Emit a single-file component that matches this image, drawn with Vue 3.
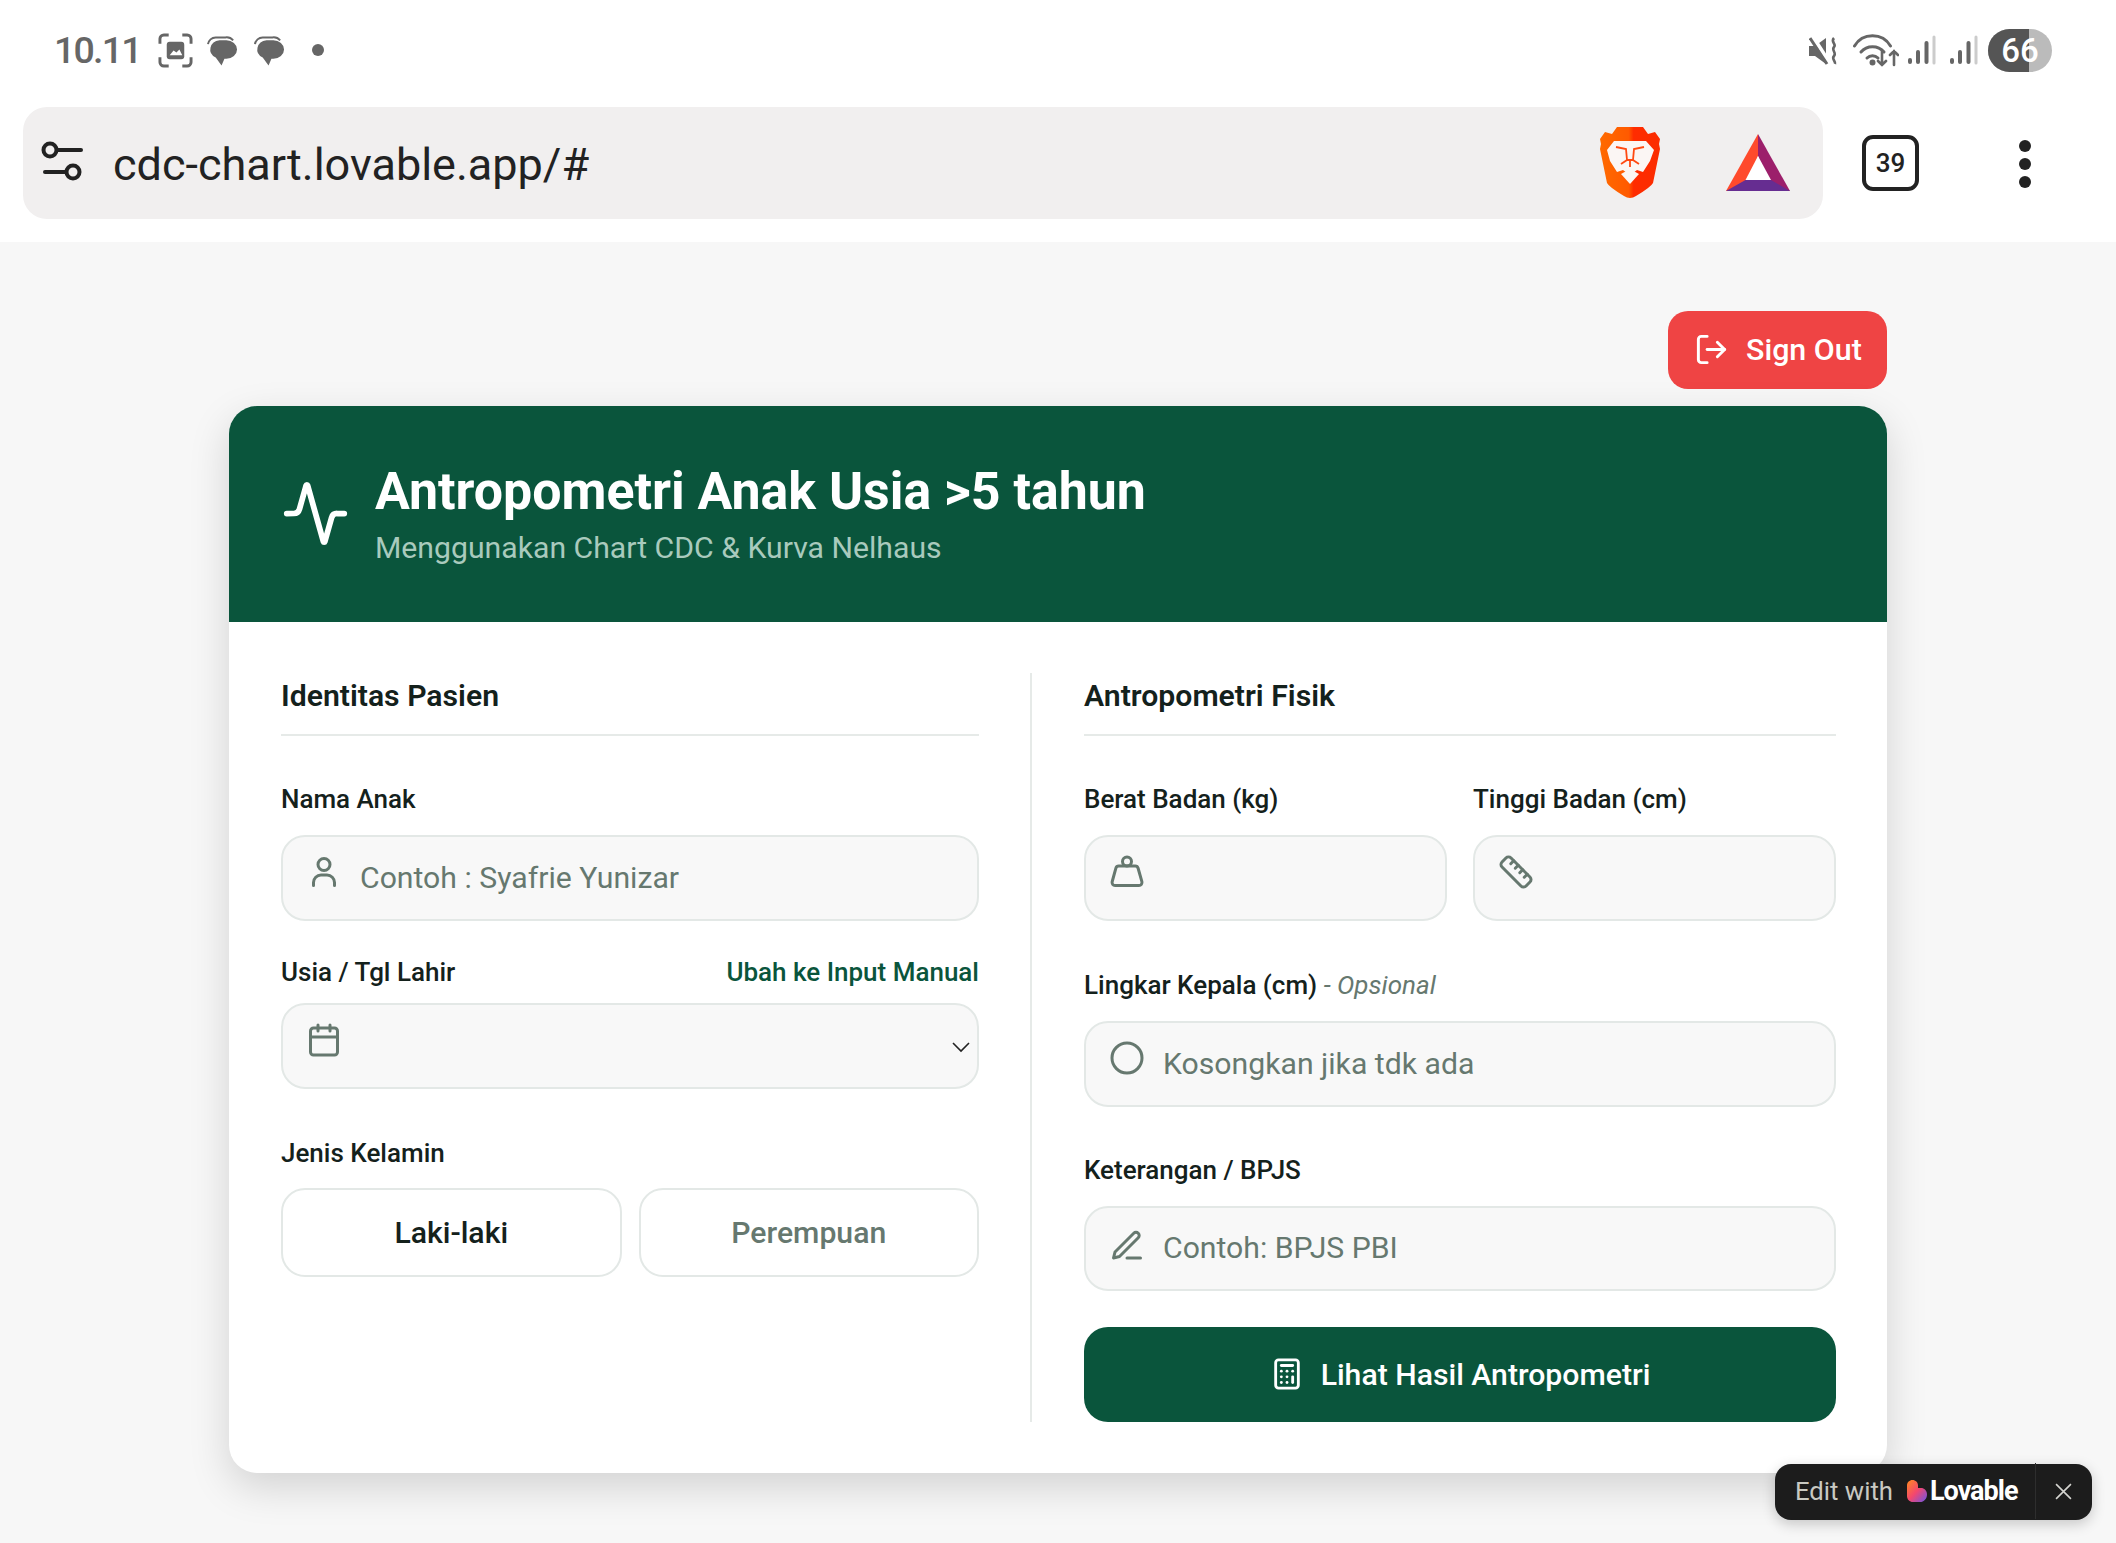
<template>
  <div class="screen">
    <div class="status-bar">
      <div class="status-left">
        <span class="clock">10.11</span>
        <svg class="st-shot" viewBox="0 0 36 36" fill="none" stroke="#666" stroke-width="3">
          <path d="M2 11V6a4 4 0 0 1 4-4h5M25 2h5a4 4 0 0 1 4 4v5M34 25v5a4 4 0 0 1-4 4h-5M11 34H6a4 4 0 0 1-4-4v-5" />
          <rect x="9" y="9" width="18" height="18" rx="3" fill="#666" stroke="none" />
          <path d="M12 23l4-5 3 2 3-3 3 6z" fill="#fff" stroke="none" />
        </svg>
        <svg v-for="n in 2" :key="n" class="st-chat" viewBox="0 0 32 30">
          <path d="M1 8a8 8 0 0 1 8-7h10a9 9 0 0 1 8 3" fill="none" stroke="#666" stroke-width="2" />
          <path d="M13 4h7a11 9.500 0 0 1 0 19h-2l-3 7-6-8.300A11 9.500 0 0 1 13 4z" fill="#666" />
        </svg>
        <span class="st-dot"></span>
      </div>
      <div class="status-right">
        <svg class="st-mute" viewBox="0 0 30 28" fill="#666">
          <path d="M0 9h6l11-8v26L6 19H0z" />
          <path d="M4 0l18 28" stroke="#fff" stroke-width="4" />
          <path d="M1 1l17 26" stroke="#666" stroke-width="3" />
          <path d="M25 1c-4 4 3 6 0 9s3 6 0 9 2 5 1 8" fill="none" stroke="#666" stroke-width="2.600" />
        </svg>
        <svg class="st-wifi" viewBox="0 0 46 33" fill="none" stroke="#666" stroke-width="3" stroke-linecap="round">
          <path d="M1.500 12a21 21 0 0 1 36 0" />
          <path d="M8 18a15 15 0 0 1 23 0" />
          <path d="M14 24a8 8 0 0 1 11 0" />
          <circle cx="19.500" cy="28.500" r="1.500" fill="#666" />
          <path d="M29 17v14M25 27l4 4 4-4M41 31V17M37 21l4-4 4 4" stroke-width="2.600" />
        </svg>
        <svg v-for="n in 2" :key="n" class="st-signal" viewBox="0 0 28 30" stroke-linecap="round" stroke-width="4">
          <path d="M2 27v-2" stroke="#666" />
          <path d="M10 27V17" stroke="#666" />
          <path d="M18.500 27V8" stroke="#666" />
          <path d="M26 28V2" stroke="#ccc" stroke-width="3" />
        </svg>
        <div class="battery"><span class="battery-fill"></span><span class="battery-num">66</span></div>
      </div>
    </div>

    <div class="browser-bar">
      <div class="url-box">
        <svg class="url-tune" viewBox="0 0 44 44" fill="none" stroke="#222" stroke-width="4" stroke-linecap="round">
          <circle cx="10" cy="9" r="6.500" />
          <path d="M17 9h24" />
          <circle cx="33" cy="31" r="6.500" />
          <path d="M26 31H5" />
        </svg>
        <span class="url-text">cdc-chart.lovable.app/#</span>
        <svg class="brave" viewBox="0 0 60 72">
          <defs>
            <linearGradient id="braveGrad" x1="0" y1="0" x2="1" y2="0">
              <stop offset="0" stop-color="#ff6a00" />
              <stop offset="0.48" stop-color="#ff5a00" />
              <stop offset="0.56" stop-color="#ff2c00" />
              <stop offset="1" stop-color="#fb2c00" />
            </linearGradient>
          </defs>
          <path d="M17 0H43L48 7 55 5 60 12 59 17 60 22 53 56Q51 60 36 69 30 73 24 69 9 60 7 56L0 22 1 17 0 12 5 5 12 7Z" fill="url(#braveGrad)" />
          <path d="M7 23L14 14H46L54 23 50 34 43 45 37 43 33 46H27L23 43 17 45 10 34Z" fill="#fbf6f4" />
          <path d="M16 20L26 22 27 33 21 37M44 20L34 22 33 33 39 37M27 33h6M30 34v6" fill="none" stroke="#ff4a12" stroke-width="1.800" />
          <path d="M21 47L30 42 39 47 30 57Z" fill="#fbf6f4" />
        </svg>
        <svg class="bat" viewBox="0 0 64 58">
          <path d="M32 0L64 57H45L32 22Z" fill="#9c1f6b" />
          <path d="M32 0L0 57H19.500L32 22Z" fill="#ff4a2c" />
          <path d="M0 57H64L45 46H19.500Z" fill="#662d91" />
          <path d="M32 22L19.500 46H45Z" fill="#fff" />
        </svg>
      </div>
      <div class="tab-count">39</div>
      <div class="kebab"><span></span><span></span><span></span></div>
    </div>

    <main class="page">
      <button class="signout">
        <svg class="ic-signout" viewBox="0 0 24 24" fill="none" stroke="#fff" stroke-width="2" stroke-linecap="round" stroke-linejoin="round">
          <path d="M9 21H5a2 2 0 0 1-2-2V5a2 2 0 0 1 2-2h4" />
          <polyline points="16 17 21 12 16 7" />
          <line x1="21" y1="12" x2="9" y2="12" />
        </svg>
        Sign Out
      </button>

      <section class="card">
        <header class="card-head">
          <svg class="ic-activity" viewBox="0 0 24 24" fill="none" stroke="#fff" stroke-width="2" stroke-linecap="round" stroke-linejoin="round">
            <path d="M22 12h-2.480a2 2 0 0 0-1.930 1.460l-2.350 8.360a.25.25 0 0 1-.48 0L9.240 2.180a.25.25 0 0 0-.48 0l-2.350 8.360A2 2 0 0 1 4.490 12H2" />
          </svg>
          <div>
            <h1>Antropometri Anak Usia &gt;5 tahun</h1>
            <p>Menggunakan Chart CDC &amp; Kurva Nelhaus</p>
          </div>
        </header>

        <div class="card-body">
          <div class="col col-left">
            <h2>Identitas Pasien</h2>

            <label class="lbl lbl-first">Nama Anak</label>
            <div class="field">
              <svg class="ic" viewBox="0 0 24 24" fill="none" stroke="currentColor" stroke-width="2" stroke-linecap="round" stroke-linejoin="round">
                <circle cx="12" cy="7" r="4" />
                <path d="M19 21v-2a5 5 0 0 0-5-5h-4a5 5 0 0 0-5 5v2" />
              </svg>
              <span class="ph">Contoh : Syafrie Yunizar</span>
            </div>

            <div class="lbl-row">
              <label class="lbl">Usia / Tgl Lahir</label>
              <a class="link">Ubah ke Input Manual</a>
            </div>
            <div class="field">
              <svg class="ic" viewBox="0 0 24 24" fill="none" stroke="currentColor" stroke-width="2" stroke-linecap="round" stroke-linejoin="round">
                <path d="M8 2v4" /><path d="M16 2v4" />
                <rect width="18" height="18" x="3" y="4" rx="2" />
                <path d="M3 10h18" />
              </svg>
              <svg class="chev" viewBox="0 0 20 12" fill="none" stroke="#222" stroke-width="1.600">
                <path d="M2 2l8 8 8-8" />
              </svg>
            </div>

            <label class="lbl lbl-gender">Jenis Kelamin</label>
            <div class="gender">
              <button class="g-btn g-active">Laki-laki</button>
              <button class="g-btn">Perempuan</button>
            </div>
          </div>

          <div class="col col-right">
            <h2>Antropometri Fisik</h2>

            <div class="two">
              <div>
                <label class="lbl lbl-first">Berat Badan (kg)</label>
                <div class="field">
                  <svg class="ic" viewBox="0 0 24 24" fill="none" stroke="currentColor" stroke-width="2" stroke-linecap="round" stroke-linejoin="round">
                    <circle cx="12" cy="5" r="3" />
                    <path d="M6.500 8a2 2 0 0 0-1.905 1.460L2.100 18.500A2 2 0 0 0 4 21h16a2 2 0 0 0 1.925-2.540L19.400 9.500A2 2 0 0 0 17.480 8Z" />
                  </svg>
                </div>
              </div>
              <div>
                <label class="lbl lbl-first">Tinggi Badan (cm)</label>
                <div class="field">
                  <svg class="ic" viewBox="0 0 24 24" fill="none" stroke="currentColor" stroke-width="2" stroke-linecap="round" stroke-linejoin="round">
                    <path d="M21.300 15.300a2.400 2.400 0 0 1 0 3.400l-2.600 2.600a2.400 2.400 0 0 1-3.400 0L2.700 8.700a2.410 2.410 0 0 1 0-3.400l2.600-2.600a2.410 2.410 0 0 1 3.400 0Z" />
                    <path d="m14.500 12.500 2-2" /><path d="m11.500 9.500 2-2" /><path d="m8.500 6.500 2-2" /><path d="m17.500 15.500 2-2" />
                  </svg>
                </div>
              </div>
            </div>

            <label class="lbl lbl-head">Lingkar Kepala (cm) <em>- Opsional</em></label>
            <div class="field">
              <svg class="ic" viewBox="0 0 24 24" fill="none" stroke="currentColor" stroke-width="2">
                <circle cx="12" cy="12" r="10" />
              </svg>
              <span class="ph">Kosongkan jika tdk ada</span>
            </div>

            <label class="lbl lbl-note">Keterangan / BPJS</label>
            <div class="field">
              <svg class="ic ic-pen" viewBox="0 0 24 24" fill="none" stroke="currentColor" stroke-width="2" stroke-linecap="round" stroke-linejoin="round">
                <path d="M12 20h9" />
                <path d="M16.500 3.500a2.120 2.120 0 0 1 3 3L7 19l-4 1 1-4Z" />
              </svg>
              <span class="ph">Contoh: BPJS PBI</span>
            </div>

            <button class="submit">
              <svg class="ic-calc" viewBox="0 0 24 24" fill="none" stroke="#fff" stroke-width="2" stroke-linecap="round" stroke-linejoin="round">
                <rect width="16" height="20" x="4" y="2" rx="2" />
                <line x1="8" x2="16" y1="6" y2="6" />
                <line x1="16" x2="16" y1="14" y2="18" />
                <path d="M16 10h.01" /><path d="M12 10h.01" /><path d="M8 10h.01" />
                <path d="M12 14h.01" /><path d="M8 14h.01" /><path d="M12 18h.01" /><path d="M8 18h.01" />
              </svg>
              Lihat Hasil Antropometri
            </button>
          </div>
        </div>
      </section>
    </main>

    <div class="lovable">
      <span class="lov-edit">Edit with</span>
      <svg class="lov-heart" viewBox="0 0 20 22">
        <defs>
          <linearGradient id="lovGrad" x1="0" y1="0" x2="1" y2="1">
            <stop offset="0" stop-color="#ff8a1e" />
            <stop offset="0.5" stop-color="#f4476e" />
            <stop offset="1" stop-color="#6a55e8" />
          </linearGradient>
        </defs>
        <path d="M5.500 0C8.500 0 11 2.400 11 5.400V8h3c3.200 0 6 2.600 6 6.400 0 4-3 7.600-7 7.600H6c-3.400 0-6-2.600-6-6V5.400C0 2.400 2.500 0 5.500 0z" fill="url(#lovGrad)" />
      </svg>
      <span class="lov-name">Lovable</span>
      <span class="lov-sep"></span>
      <svg class="lov-x" viewBox="0 0 16 16" fill="none" stroke="#d4d4d0" stroke-width="1.500">
        <path d="M1 1l14 14M15 1L1 15" />
      </svg>
    </div>
  </div>
</template>

<script setup>
</script>

<style>
html, body {
  margin: 0;
  background: #f7f7f7;
}
</style>

<style scoped>
.screen {
  position: relative;
  width: 2116px;
  height: 1543px;
  overflow: hidden;
  font-family: Roboto, "Liberation Sans", sans-serif;
  color: #14211c;
  background: #f7f7f7;
}

.status-bar {
  height: 100px;
  background: #fff;
  display: flex;
  justify-content: space-between;
  align-items: center;
  padding: 0 64px 0 54px;
  box-sizing: border-box;
}
.status-left, .status-right {
  display: flex;
  align-items: center;
}
.clock {
  width: 86px;
  font-size: 37.500px;
  font-weight: 500;
  color: #666;
  letter-spacing: -1.800px;
  margin-right: 18px;
}
.st-shot { width: 35px; height: 35px; margin-right: 14px; }
.st-chat { width: 31px; height: 30px; margin-right: 16px; margin-top: 2px; }
.st-dot {
  width: 12px;
  height: 12px;
  border-radius: 50%;
  background: #666;
  margin-left: 11px;
}
.st-mute { width: 30px; height: 28px; margin-right: 14px; margin-top: 2px; }
.st-wifi { width: 46px; height: 33px; margin-right: 9px; }
.st-signal { width: 28px; height: 30px; margin-right: 13.500px; }
.battery {
  position: relative;
  width: 64px;
  height: 43px;
  margin-left: -3px;
  border-radius: 22px;
  background: #bbb;
  overflow: hidden;
  display: flex;
  align-items: center;
  justify-content: center;
}
.battery-fill {
  position: absolute;
  left: 0;
  top: 0;
  bottom: 0;
  width: 41px;
  background: #555;
}
.battery-num {
  position: relative;
  color: #fff;
  font-size: 33px;
  font-weight: 500;
}

.browser-bar {
  height: 142px;
  background: #fff;
  display: flex;
  align-items: flex-start;
  padding: 7px 0 0 23px;
  box-sizing: border-box;
}
.url-box {
  flex: none;
  width: 1800px;
  height: 112px;
  background: #f1efef;
  border-radius: 24px;
  display: flex;
  align-items: center;
  padding-left: 17px;
  box-sizing: border-box;
}
.url-tune { width: 44px; height: 44px; margin-right: 29px; flex: none; }
.url-text {
  font-size: 45px;
  color: #222;
  width: 1487px;
  flex: none;
  padding-top: 2px;
}
.brave { width: 60px; height: 72px; flex: none; }
.bat { width: 64px; height: 58px; margin-left: 66px; flex: none; }
.tab-count {
  flex: none;
  box-sizing: border-box;
  width: 57px;
  height: 56px;
  margin: 28px 0 0 39px;
  border: 4px solid #222;
  border-radius: 11px;
  display: flex;
  align-items: center;
  justify-content: center;
  font-size: 26px;
  font-weight: 500;
  color: #222;
}
.kebab {
  margin: 33px 0 0 100px;
  display: flex;
  flex-direction: column;
  gap: 6px;
}
.kebab span {
  width: 12px;
  height: 12px;
  border-radius: 50%;
  background: #222;
}

.page {
  padding: 69px 229px 0;
}
.signout {
  display: flex;
  align-items: center;
  gap: 17px;
  margin: 0 0 17px auto;
  width: 219px;
  height: 78px;
  padding: 0 0 2px 26px;
  border: none;
  border-radius: 20px;
  background: #ef4444;
  color: #fff;
  font: 500 30.400px Roboto, sans-serif;
  box-sizing: border-box;
}
.ic-signout { width: 35px; height: 35px; }

.card {
  width: 1658px;
  height: 1067px;
  background: #fff;
  border-radius: 28px;
  box-shadow: 0 14px 40px rgba(0, 0, 0, 0.15);
  overflow: hidden;
}
.card-head {
  height: 216px;
  background: #0a553c;
  display: flex;
  align-items: center;
  gap: 25px;
  padding: 0 0 0 52px;
  box-sizing: border-box;
  color: #fff;
}
.ic-activity { width: 69px; height: 69px; flex: none; margin-top: -2px; }
.card-head h1 {
  margin: 1px 0 0;
  font-size: 51.850px;
  font-weight: 700;
  line-height: 60px;
}
.card-head p {
  margin: 7px 0 0;
  font-size: 30.200px;
  line-height: 38px;
  color: #a9cabd;
}

.card-body {
  display: flex;
  padding: 51px 51px 51px 52px;
}
.col { box-sizing: border-box; height: 749px; }
.col-left { width: 698px; margin-right: 51px; flex: none; }
.col-right {
  flex: 1;
  padding-left: 52px;
  border-left: 2px solid #e6eae8;
  display: flex;
  flex-direction: column;
}
h2 {
  margin: 0;
  height: 61px;
  font-size: 30.200px;
  font-weight: 600;
  line-height: 45px;
  border-bottom: 2px solid #e6eae8;
  box-sizing: content-box;
}

.lbl {
  display: block;
  font-size: 26px;
  font-weight: 500;
  line-height: 36px;
  color: #14211c;
  margin-bottom: 18px;
}
.lbl em {
  font-weight: 400;
  color: #66786f;
}
.lbl-first { margin-top: 45px; }
.lbl-row {
  display: flex;
  justify-content: space-between;
  margin-top: 33px;
}
.lbl-row .lbl { margin-bottom: 13px; }
.link {
  font-size: 26px;
  font-weight: 500;
  line-height: 36px;
  color: #0a553c;
}
.lbl-gender { margin-top: 46px; margin-bottom: 17px; }
.lbl-head { margin-top: 46px; margin-bottom: 18px; }
.lbl-note { margin-top: 45px; margin-bottom: 18px; }

.field {
  position: relative;
  height: 86px;
  box-sizing: border-box;
  border: 2px solid #e3e8e6;
  border-radius: 24px;
  background: #f8f8f8;
  display: flex;
  align-items: center;
  padding: 0 0 1px 77px;
}
.ic {
  position: absolute;
  left: 23px;
  top: 17px;
  width: 36px;
  height: 36px;
  color: #66786f;
}
.ic-pen { top: 20px; }
.ph {
  font-size: 30.200px;
  color: #66786f;
}
.chev {
  position: absolute;
  right: 6px;
  top: 36px;
  width: 20px;
  height: 12px;
}

.gender {
  display: flex;
  gap: 17px;
}
.g-btn {
  flex: 1;
  height: 89px;
  background: #fff;
  border: 2px solid #e3e8e6;
  border-radius: 24px;
  font: 500 30.200px Roboto, sans-serif;
  color: #66786f;
}
.g-active { color: #14211c; }

.two {
  display: grid;
  grid-template-columns: 1fr 1fr;
  gap: 26px;
}

.submit {
  margin-top: 36px;
  height: 95px;
  padding-bottom: 2px;
  border: none;
  border-radius: 24px;
  background: #0a553c;
  color: #fff;
  font: 500 30.200px Roboto, sans-serif;
  display: flex;
  align-items: center;
  justify-content: center;
  gap: 17px;
}
.ic-calc { width: 34px; height: 34px; }

.lovable {
  position: absolute;
  left: 1775px;
  top: 1464px;
  width: 317px;
  height: 56px;
  background: #1c1c1c;
  border-radius: 16px;
  box-shadow: 0 4px 14px rgba(0, 0, 0, 0.2);
  display: flex;
  align-items: center;
  padding: 0 0 2px 20px;
  box-sizing: border-box;
}
.lov-edit { font-size: 25.700px; color: #c9c9c2; margin-right: 14px; }
.lov-heart { width: 20px; height: 22px; margin-right: 3px; }
.lov-name { font-size: 27px; font-weight: 700; color: #fff; letter-spacing: -1px; }
.lov-sep { width: 1px; height: 56px; background: #2e2e2e; margin-left: 18px; }
.lov-x { width: 17px; height: 17px; margin-left: 19px; }
</style>
